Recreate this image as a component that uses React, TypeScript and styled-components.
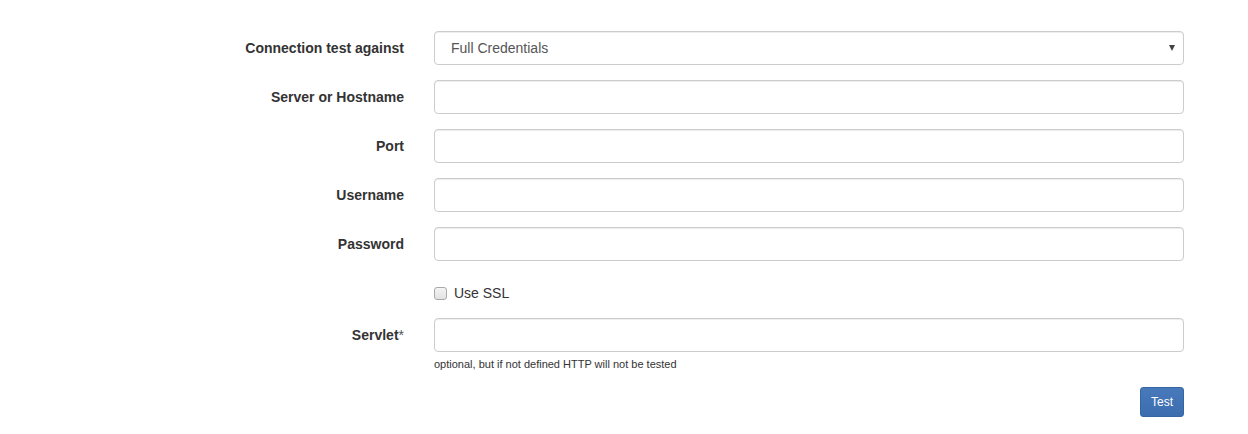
import React from "react";
import styled, { createGlobalStyle } from "styled-components";

const Global = createGlobalStyle`
  html, body { margin: 0; padding: 0; background: #fff; }
  body {
    font-family: "Liberation Sans", Arial, sans-serif;
    font-size: 14px;
    line-height: 1.42857143;
    color: #333;
  }
  * { box-sizing: border-box; }
`;

const Form = styled.form`
  width: 1040px;
  margin-left: 159px;
  padding-top: 31px;
  display: flex;
  flex-direction: column;
`;

const Group = styled.div<{ $mb?: number }>`
  display: grid;
  grid-template-columns: 260px 780px;
  margin-bottom: ${(p) => (p.$mb ?? 15)}px;
`;

const Label = styled.label`
  padding: 7px 15px 0 15px;
  text-align: right;
  font-weight: bold;
  font-size: 14px;
  line-height: 20px;
  color: #333;
`;

const Star = styled.span`
  font-weight: normal;
  color: #555;
`;

const Field = styled.div`
  grid-column: 2;
  padding: 0 15px;
  position: relative;
  display: flex;
  flex-direction: column;
`;

const Input = styled.input`
  display: block;
  width: 100%;
  height: 34px;
  padding: 6px 12px;
  font-family: inherit;
  font-size: 14px;
  line-height: 1.42857143;
  color: #555;
  background: #fff;
  border: 1px solid #ccc;
  border-radius: 4px;
  box-shadow: inset 0 1px 1px rgba(0, 0, 0, 0.075);
  outline: none;
`;

const Select = styled.select`
  display: block;
  width: 100%;
  height: 34px;
  padding: 6px 16px;
  font-family: inherit;
  font-size: 14px;
  color: #555;
  background: #fff;
  border: 1px solid #ccc;
  border-radius: 4px;
  box-shadow: inset 0 1px 1px rgba(0, 0, 0, 0.075);
  appearance: none;
  -webkit-appearance: none;
  outline: none;
`;

const Caret = styled.span`
  position: absolute;
  right: 24px;
  top: 14px;
  width: 0;
  height: 0;
  border-left: 3.5px solid transparent;
  border-right: 3.5px solid transparent;
  border-top: 6px solid #444;
  pointer-events: none;
`;

const CheckRow = styled.label`
  display: flex;
  align-items: center;
  gap: 7px;
  padding-top: 7px;
  min-height: 27px;
  font-size: 14px;
  line-height: 20px;
  color: #333;
`;

const Box = styled.span`
  width: 13px;
  height: 13px;
  border: 1px solid #a9a9a9;
  border-radius: 3px;
  background: linear-gradient(#f4f4f4, #e2e2e2);
  margin-top: 1px;
`;

const Help = styled.span`
  display: block;
  margin-top: 5px;
  font-size: 11px;
  line-height: 15px;
  color: #333;
`;

const Actions = styled.div`
  grid-column: 2;
  padding: 0 15px;
  display: flex;
  justify-content: flex-end;
`;

const Button = styled.button`
  height: 30px;
  padding: 5px 10px;
  font-family: inherit;
  font-size: 12px;
  line-height: 1.5;
  color: #fff;
  background: linear-gradient(#4879bb, #3c6dae);
  border: 1px solid #3565a3;
  border-radius: 3px;
  cursor: pointer;
`;

const fields = ["Server or Hostname", "Port", "Username", "Password"];

export default function App() {
  return (
    <>
      <Global />
      <Form onSubmit={(e) => e.preventDefault()}>
        <Group>
          <Label>Connection test against</Label>
          <Field>
            <Select defaultValue="full">
              <option value="full">Full Credentials</option>
            </Select>
            <Caret />
          </Field>
        </Group>
        {fields.map((f) => (
          <Group key={f}>
            <Label>{f}</Label>
            <Field>
              <Input type={f === "Password" ? "password" : "text"} />
            </Field>
          </Group>
        ))}
        <Group>
          <Field>
            <CheckRow>
              <Box />
              Use SSL
            </CheckRow>
          </Field>
        </Group>
        <Group>
          <Label>
            Servlet<Star>*</Star>
          </Label>
          <Field>
            <Input type="text" />
            <Help>optional, but if not defined HTTP will not be tested</Help>
          </Field>
        </Group>
        <Group>
          <Actions>
            <Button type="button">Test</Button>
          </Actions>
        </Group>
      </Form>
    </>
  );
}
